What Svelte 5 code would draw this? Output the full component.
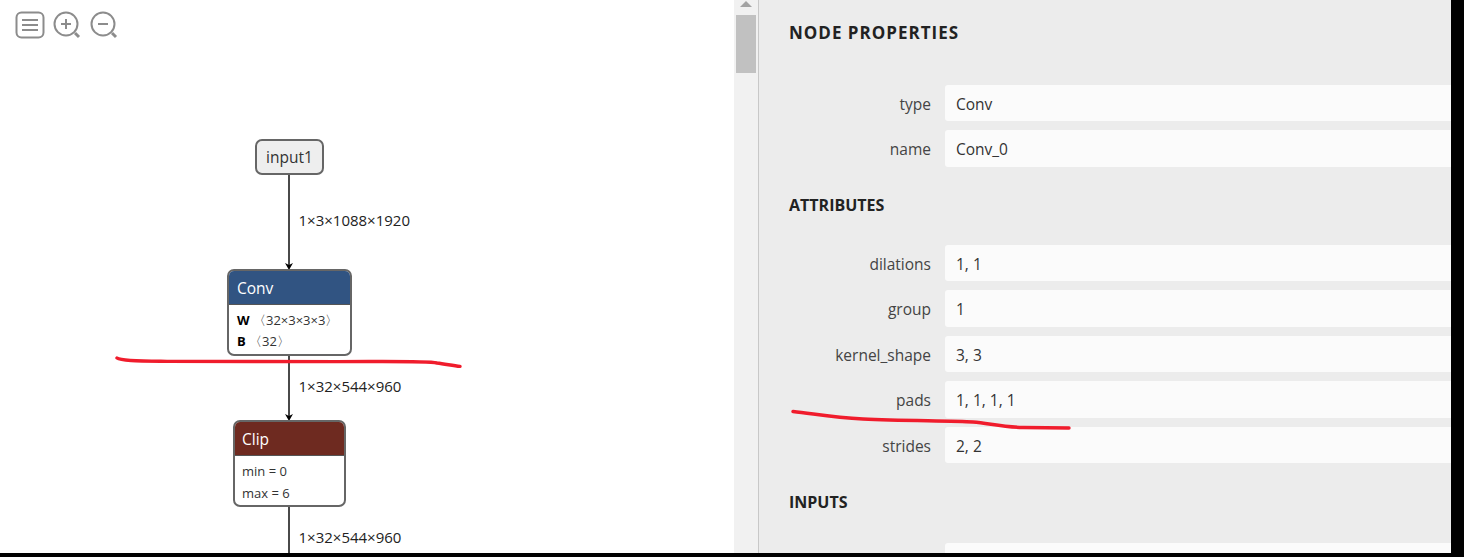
<script>
  const properties = [
    { label: 'type', value: 'Conv' },
    { label: 'name', value: 'Conv_0' }
  ];
  const attributes = [
    { label: 'dilations', value: '1, 1' },
    { label: 'group', value: '1' },
    { label: 'kernel_shape', value: '3, 3' },
    { label: 'pads', value: '1, 1, 1, 1' },
    { label: 'strides', value: '2, 2' }
  ];
  const shapes = [
    { text: '1×3×1088×1920', top: 211 },
    { text: '1×32×544×960', top: 377 },
    { text: '1×32×544×960', top: 528 }
  ];
</script>

<div class="screen">
  <div class="shot">
    <section class="canvas">
      <div class="toolbar">
        <svg width="30" height="28" viewBox="0 0 30 28" fill="none" stroke="#8c8c8c" stroke-width="2">
          <rect x="1.5" y="1.5" width="27" height="25" rx="5" />
          <path d="M7 9h16M7 14h16M7 19h16" stroke-width="1.8" />
        </svg>
        <svg width="28" height="28" viewBox="0 0 28 28" fill="none" stroke="#8c8c8c" stroke-width="2">
          <circle cx="13" cy="13" r="11.5" />
          <path d="M8 13h10M13 8v10" />
          <path d="M22 22l4 4" stroke-width="3" />
        </svg>
        <svg class="zoom-out" width="28" height="28" viewBox="0 0 28 28" fill="none" stroke="#8c8c8c" stroke-width="2">
          <circle cx="13" cy="13" r="11.5" />
          <path d="M8 13h10" />
          <path d="M22 22l4 4" stroke-width="3" />
        </svg>
      </div>

      <svg class="edges" width="734" height="557" fill="none" stroke="#4a4a4a" stroke-width="2">
        <path d="M289 175V266" />
        <path d="M289 355V417" />
        <path d="M289 506V557" />
        <path d="M285 263l4 2 4-2-4 7z" fill="#000" stroke="none" />
        <path d="M285 414l4 2 4-2-4 7z" fill="#000" stroke="none" />
      </svg>

      {#each shapes as shape}
        <span class="shape" style="top: {shape.top}px">{shape.text}</span>
      {/each}

      <div class="input-node">input1</div>

      <div class="node conv">
        <div class="node-title">Conv</div>
        <div class="node-body">
          <div><b>W</b> 〈32×3×3×3〉</div>
          <div><b>B</b> 〈32〉</div>
        </div>
      </div>

      <div class="node clip">
        <div class="node-title">Clip</div>
        <div class="node-body">
          <div>min = 0</div>
          <div>max = 6</div>
        </div>
      </div>
    </section>

    <div class="scrollbar">
      <span class="arrow"></span>
      <span class="thumb"></span>
    </div>

    <aside class="panel">
      <h2 class="title">NODE PROPERTIES</h2>
      <div class="rows">
        {#each properties as row}
          <div class="row">
            <span class="label">{row.label}</span>
            <span class="value">{row.value}</span>
          </div>
        {/each}
      </div>

      <h2 class="attrs">ATTRIBUTES</h2>
      <div class="rows">
        {#each attributes as row}
          <div class="row">
            <span class="label">{row.label}</span>
            <span class="value">{row.value}</span>
          </div>
        {/each}
      </div>

      <h2 class="inputs">INPUTS</h2>
      <div class="rows">
        <div class="row">
          <span class="label"></span>
          <span class="value"></span>
        </div>
      </div>
    </aside>

    <!-- hand drawn marks on top of the screenshot -->
    <svg class="marks" width="1451" height="553" fill="none" stroke="#f01c2c" stroke-width="3.400" stroke-linecap="round">
      <path d="M117 358c4 3 22 3 50 3.400l170 .2c50 0 90-.8 100 1.400 8 1 16 2.600 23 3.400" />
      <path d="M793 411.500c20 2 38 6 70 7.500 40 2 90 1.500 110 3 15 1 28 5 50 5.500l46 .5" />
    </svg>
  </div>
</div>

<style>
  :global(body) {
    margin: 0;
    background: #000;
  }
  .screen {
    width: 1464px;
    height: 557px;
    background: #000;
    overflow: hidden;
  }
  .shot {
    position: relative;
    display: flex;
    width: 1451px;
    height: 553px;
    overflow: hidden;
    font-family: "Open Sans", "Noto Sans", sans-serif;
    color: #333;
  }
  .canvas {
    position: relative;
    width: 734px;
    flex: none;
    background: #fff;
  }
  .toolbar {
    display: flex;
    align-items: flex-start;
    gap: 8px;
    padding: 11px 0 0 15px;
  }
  .zoom-out {
    margin-left: 1px;
  }
  .edges {
    position: absolute;
    left: 0;
    top: 0;
  }
  .shape {
    position: absolute;
    left: 298.500px;
    font-size: 15px;
    line-height: 18px;
    color: #222;
  }
  .input-node {
    position: absolute;
    left: 255px;
    top: 139px;
    box-sizing: border-box;
    width: 69px;
    height: 36px;
    border: 2px solid #666;
    border-radius: 7px;
    background: #eee;
    font-size: 15.500px;
    line-height: 33px;
    text-align: center;
  }
  .node {
    position: absolute;
    box-sizing: border-box;
    height: 87px;
    border: 2px solid #666;
    border-radius: 7px;
    overflow: hidden;
    background: #fff;
  }
  .conv {
    left: 227px;
    top: 269px;
    width: 125px;
  }
  .clip {
    left: 233px;
    top: 420px;
    width: 113px;
  }
  .node-title {
    height: 33px;
    padding-left: 7px;
    border-bottom: 1px solid #555;
    color: #fff;
    font-size: 15.500px;
    line-height: 35px;
  }
  .conv .node-title {
    padding-left: 8px;
    background: #315482;
  }
  .clip .node-title {
    background: #6e2a20;
  }
  .node-body {
    padding: 4px 0 0 7px;
    font-size: 13px;
    line-height: 22px;
    color: #333;
    white-space: nowrap;
  }
  .conv .node-body {
    padding: 5px 0 0 8px;
    line-height: 20.500px;
  }
  .conv .node-body b {
    color: #000;
    font-weight: 700;
  }
  .scrollbar {
    display: flex;
    flex-direction: column;
    align-items: center;
    box-sizing: border-box;
    width: 25px;
    flex: none;
    background: #f1f1f1;
    border-right: 1px solid #c8c8c8;
  }
  .arrow {
    width: 0;
    height: 0;
    margin-top: 1px;
    border: 6px solid transparent;
    border-top: 0;
    border-bottom: 6px solid #a3a3a3;
  }
  .thumb {
    width: 20px;
    height: 58px;
    margin-top: 8px;
    background: #c1c1c1;
  }
  .panel {
    flex: 1;
    background: #ececec;
    padding-left: 30px;
  }
  h2 {
    margin: 0;
    font-size: 16px;
    font-weight: 700;
    line-height: 22px;
    color: #222;
  }
  .title {
    padding-top: 22px;
    height: 63px;
    font-size: 17px;
    letter-spacing: 1px;
  }
  .attrs {
    padding-top: 27px;
    height: 51.300px;
  }
  .inputs {
    padding-top: 28px;
    height: 52px;
  }
  .rows {
    display: flex;
    flex-direction: column;
    gap: 9px;
  }
  .row {
    display: flex;
    gap: 14px;
    height: 36.400px;
    font-size: 15.500px;
    line-height: 39px;
  }
  .label {
    width: 142px;
    flex: none;
    text-align: right;
    color: #444;
  }
  .value {
    flex: 1;
    padding-left: 11px;
    background: #fbfbfb;
    border-radius: 3px 0 0 3px;
    color: #333;
  }
  .marks {
    position: absolute;
    left: 0;
    top: 0;
    pointer-events: none;
  }
</style>
